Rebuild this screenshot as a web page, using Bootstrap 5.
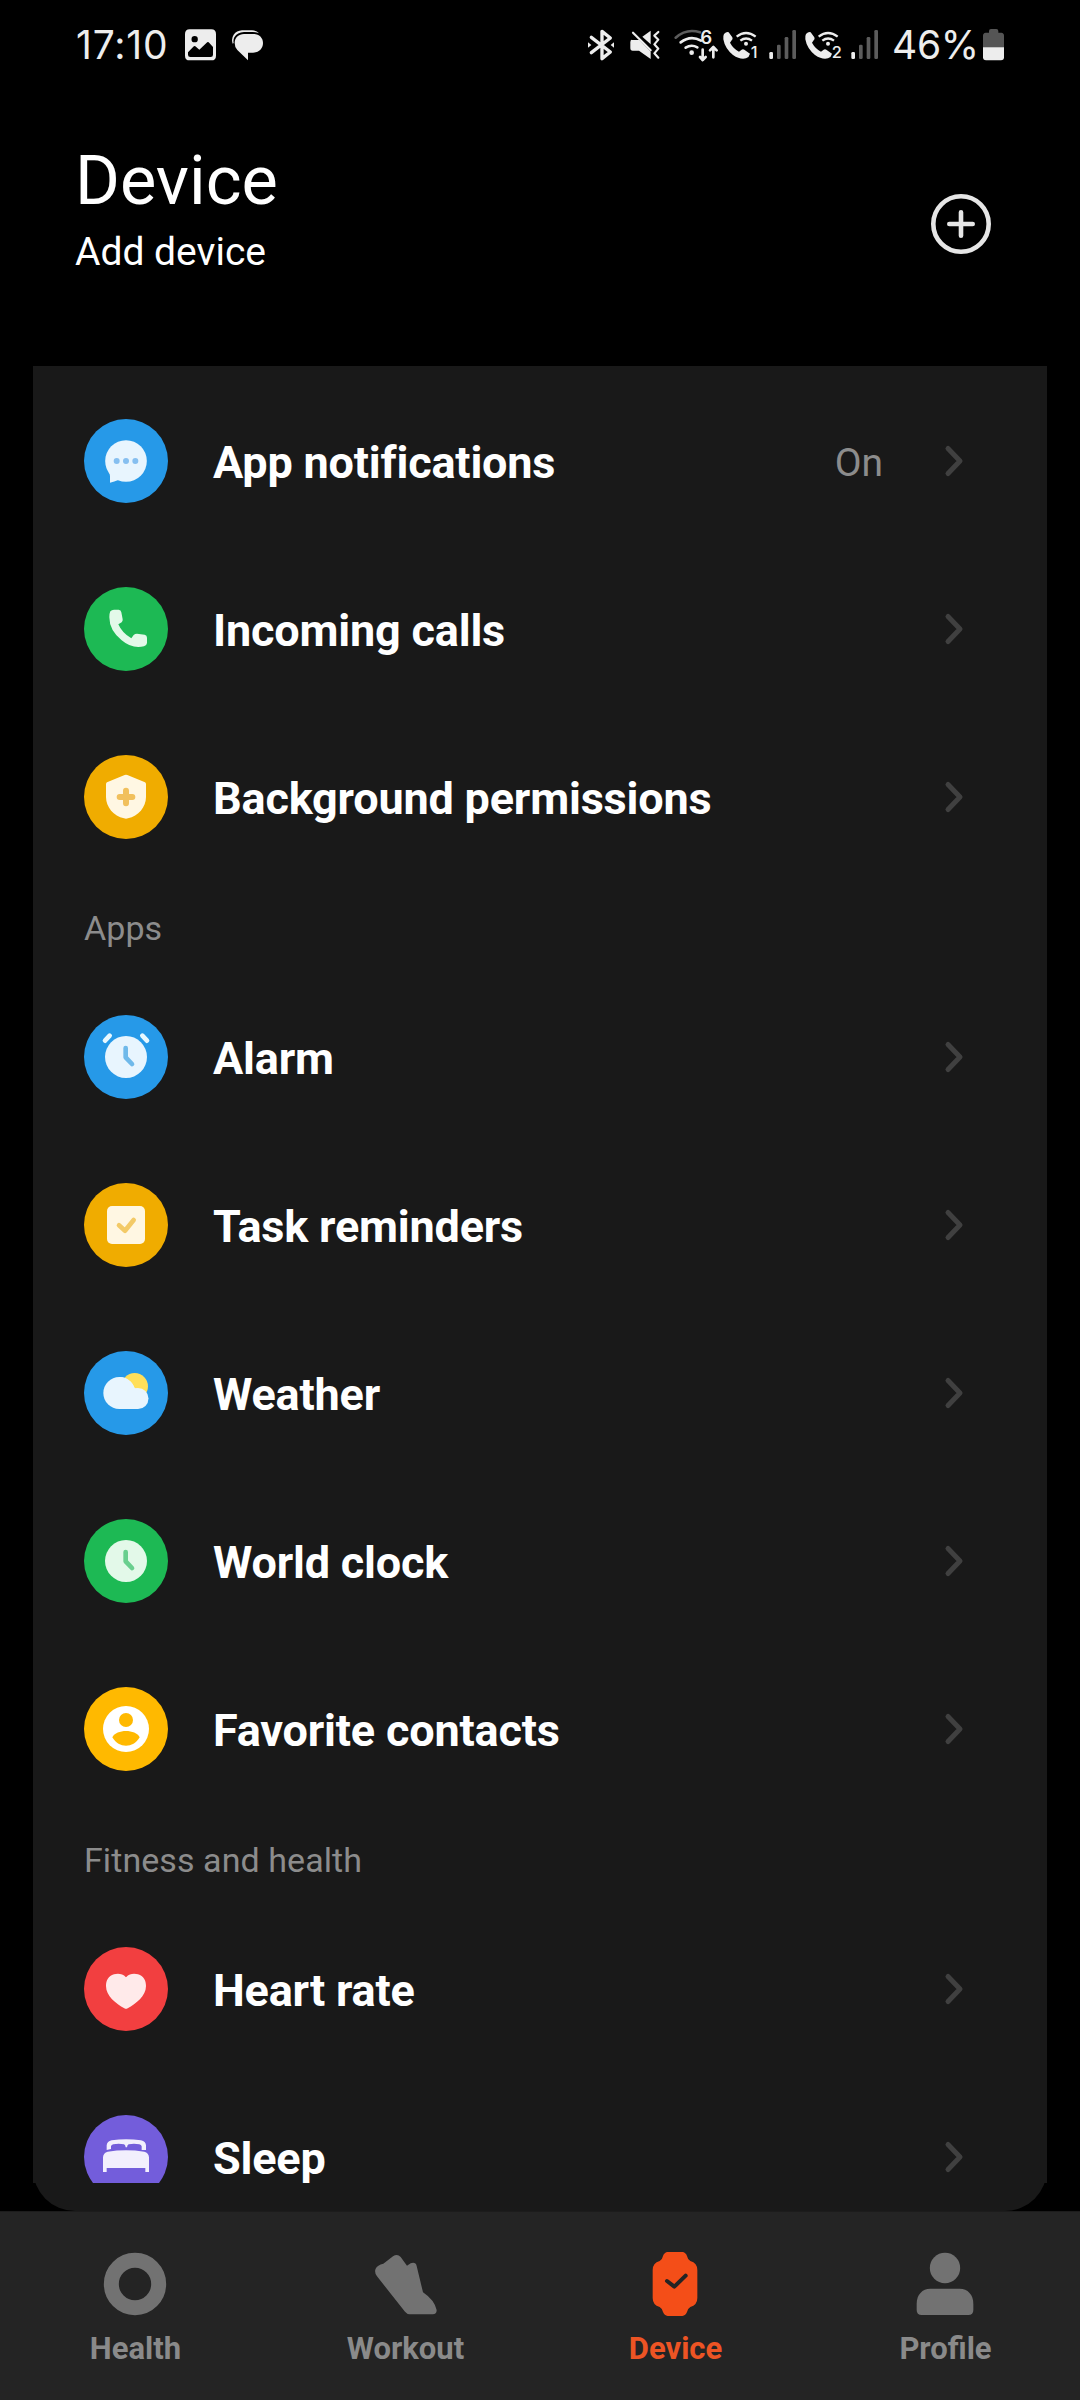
<!DOCTYPE html>
<html lang="en">
<head>
<meta charset="utf-8">
<meta name="viewport" content="width=device-width, initial-scale=1">
<title>Device</title>
<link href="https://cdn.jsdelivr.net/npm/bootstrap@5.3.0/dist/css/bootstrap.min.css" rel="stylesheet">
<style>
  body { background: #000; color: #fff; font-family: Roboto, sans-serif; width: 1080px; height: 2400px; overflow: hidden; }
  svg { display: block; flex: none; overflow: visible; }
  .status-bar { height: 90px; padding: 0 76px; color: #ededed; font-family: Inter, sans-serif; font-size: 39px; }
  .status-bar .clock { width: 109px; letter-spacing: .8px; }
  .status-bar .battery-text { width: 91px; margin-left: 13px; letter-spacing: -.3px; }
  .status-bar svg { fill: #ededed; height: 32px; }
  .ln { fill: none; stroke: #ededed; stroke-linecap: round; stroke-linejoin: round; }
  .dim { fill: #5c5c5c; }
  .app-header { height: 276px; padding: 51px 89px 0 75px; }
  .app-header h1 { font-size: 68.500px; font-weight: 400; line-height: 80px; margin: 0 0 7px; }
  .app-header p { font-size: 39px; line-height: 48px; margin: 0; }
  .add-btn { margin-top: 53px; }
  .panel { margin: 0 33px; height: 1845px; background: #191919; border-radius: 0 0 42px 42px; }
  .scroller { height: 1817px; background: #191919; padding-top: 11px; overflow: hidden; }
  .setting { height: 168px; padding: 0 84px 0 51px; }
  .setting .label { font-size: 45px; font-weight: 700; line-height: 54px; padding-top: 3px; margin-left: 45px; letter-spacing: -.19px; }
  .setting .value { font-size: 39px; line-height: 54px; padding-top: 3px; margin-right: 62px; color: #8c8c8c; }
  .section-title { height: 92px; padding: 3px 51px 0; font-size: 34px; font-weight: 400; color: #8c8c8c; margin: 0; letter-spacing: .07px; }
  .tabs { height: 189px; border-top: 1px solid #1c1c1c; background: #242424; padding-top: 40px; }
  .tab-item { color: #8a8a8a; font-size: 31px; font-weight: 700; line-height: 40px; }
  .tab-item span { padding-left: 1px; }
  .tab-item svg { fill: #727272; margin-bottom: 13px; }
  .tab-item.current { color: #ed5424; }
  .tab-item.current svg { fill: #f44e18; }
</style>
</head>
<body>
<svg width="0" height="0" class="position-absolute">
  <symbol id="chev" viewBox="0 0 18 32" overflow="visible"><path d="M3 3.5 15 16 3 28.5" fill="none" stroke="#404040" stroke-width="5" stroke-linecap="round" stroke-linejoin="round"/></symbol>
  <symbol id="call" viewBox="459 57 108 96" overflow="visible">
    <path d="M462 72Q470 64 476 67L487 82Q490 88 484 92L480 98Q490 116 507 125L515 119Q519 117 523 119L540 131Q538 141 528 145Q511 150 489 135Q465 116 460 88Q459 77 462 72Z"/>
    <path class="ln" style="stroke-linecap:butt" stroke-width="7" d="M500 80Q528 58 557 80M511 92Q528 79 546 92"/>
    <circle cx="528" cy="101" r="6"/>
  </symbol>
  <symbol id="signal" viewBox="594 57 87 96"><rect x="598" y="126" width="11" height="21" rx="4"/><g class="dim"><rect x="621" y="104" width="11" height="43" rx="4"/><rect x="644" y="81" width="11" height="66" rx="4"/><rect x="667" y="60" width="11" height="87" rx="4"/></g></symbol>
</svg>

<div class="status-bar d-flex align-items-center">
  <span class="clock">17:10</span>
  <svg width="31" viewBox="405 86 93 96"><path fill-rule="evenodd" d="M419 87H484Q498 87 498 101V166Q498 180 484 180H419Q405 180 405 166V101Q405 87 419 87ZM434 107A9.500 9.500 0 1 0 434 126A9.500 9.500 0 1 0 434 107ZM414 156V163Q414 170 421 170H482Q489 170 489 163V140L476 126Q473 124 470 127L448 148L436 138Q433 136 430 139Z"/></svg>
  <svg width="31" viewBox="546 89 93 96" style="margin-left:16px"><path d="M594 183V160H609C626 160 639 148 639 131S626 104 609 104H582C566 104 554 115 554 131Q554 144 562 152Z"/><path d="M548 133Q543 118 551 106Q560 94 576 93H606Q620 94 627 102Q619 98 608 98H582Q562 99 553 114Q549 122 551 131Z"/></svg>
  <svg class="ms-auto" width="28" viewBox="51 57 84 96"><path class="ln" stroke-width="10" d="M64 82 121 126 96 146V64L121 84 64 128"/><path d="M54 97 64 105 54 113ZM132 97 122 105 132 113Z"/></svg>
  <svg width="30" viewBox="180 57 90 96" style="margin-left:15px"><path d="M183 90H208L242 125V147L207 122H188Q181 122 181 114V96Q181 90 187 88ZM217 80 242 62V103Z"/><path class="ln" stroke-width="6.500" d="M189 68 242 121M265 66 253 77 265 89 253 103 265 116 253 130 265 143"/></svg>
  <svg width="45" viewBox="312 57 135 96" style="margin-left:14px"><path class="ln" style="stroke:#5c5c5c" stroke-width="8" stroke-linecap="butt" d="M317 83Q350 54 390 67"/><path class="ln" stroke-width="8" d="M332 97Q362 74 393 92M347 113Q364 102 382 112M398 119V149M390 141 398 150 407 141M430 142V112M420 121 430 111 440 121"/><circle cx="365" cy="128" r="7"/><text x="391" y="101" font-family="Inter" font-weight="600" font-size="56">6</text></svg>
  <svg width="36" viewBox="0 0 108 96" style="margin-left:4px"><use href="#call" width="108" height="96"/><text x="83" y="87" font-family="Inter" font-weight="500" font-size="49">1</text></svg>
  <svg width="29" viewBox="0 0 87 96" style="margin-left:9px"><use href="#signal" width="87" height="96"/></svg>
  <svg width="36" viewBox="0 0 108 96" style="margin-left:8px"><use href="#call" width="108" height="96"/><text x="80" y="87" font-family="Inter" font-weight="500" font-size="49">2</text></svg>
  <svg width="29" viewBox="0 0 87 96" style="margin-left:9px"><use href="#signal" width="87" height="96"/></svg>
  <span class="battery-text">46%</span>
  <svg width="21" viewBox="579 56 63 96"><path fill="#555" d="M597 67V62Q597 56 603 56H619Q625 56 625 62V67H634Q642 68 642 76V112H579V76Q579 68 587 67Z"/><path d="M579 111H642V141Q642 150 633 150H588Q579 150 579 141Z"/></svg>
</div>

<header class="app-header d-flex justify-content-between align-items-start">
  <div><h1>Device</h1><p>Add device</p></div>
  <svg class="add-btn" width="60" height="60" viewBox="0 0 60 60" fill="none" stroke="#e6e6e6" stroke-width="4.600" stroke-linecap="round"><circle cx="30" cy="30" r="27.700"/><path d="M30 18.300V41.700M18.300 30H41.700"/></svg>
</header>

<main class="panel">
  <div class="scroller">
    <div class="setting d-flex align-items-center">
      <svg width="84" height="84" viewBox="0 0 252 252"><circle cx="126" cy="126" r="126" fill="#2699e8"/><circle cx="126" cy="126" r="62.500" fill="#e8f5fe"/><path fill="#e8f5fe" d="M68 145Q78 158 78 172V191Q91 188 103 183L126 150Z"/><g fill="#86bff0"><circle cx="98" cy="126" r="9"/><circle cx="126" cy="126" r="9"/><circle cx="154" cy="126" r="9"/></g></svg>
      <span class="label flex-grow-1">App notifications</span><span class="value">On</span>
      <svg width="18" height="32"><use href="#chev"/></svg>
    </div>
    <div class="setting d-flex align-items-center">
      <svg width="84" height="84" viewBox="0 0 252 252"><circle cx="126" cy="126" r="126" fill="#1db954"/><path fill="#e3f9e9" d="M79 73Q83 68 90 68H104Q111 69 112 76L116 97Q117 102 113 106L103 112Q114 138 142 154L149 144Q153 140 159 140L182 143Q189 145 189 152V168Q188 176 180 178Q145 187 113 160Q76 130 76 91Q76 79 79 73Z"/></svg>
      <span class="label flex-grow-1">Incoming calls</span>
      <svg width="18" height="32"><use href="#chev"/></svg>
    </div>
    <div class="setting d-flex align-items-center">
      <svg width="84" height="84" viewBox="0 0 252 252"><circle cx="126" cy="126" r="126" fill="#f0ac00"/><path fill="#fff7e3" d="M122 60Q126 58 130 60L183 82Q186 84 186 88V126C186 156 163 184 132 190Q126 192 120 190C89 184 66 156 66 126V88Q66 84 69 82Z"/><path d="M126 107V145M107 126H145" stroke="#f1c05c" stroke-width="18" stroke-linecap="round"/></svg>
      <span class="label flex-grow-1">Background permissions</span>
      <svg width="18" height="32"><use href="#chev"/></svg>
    </div>
    <h2 class="section-title d-flex align-items-center">Apps</h2>
    <div class="setting d-flex align-items-center">
      <svg width="84" height="84" viewBox="0 0 252 252"><circle cx="126" cy="126" r="126" fill="#2699e8"/><circle cx="126" cy="126" r="63" fill="#e8f5fe"/><path d="M63 77 77 62M175 62 189 77" stroke="#e8f8ff" stroke-width="14" stroke-linecap="round"/><path d="M125 99V127L144 147" fill="none" stroke="#6fb9ea" stroke-width="14" stroke-linecap="round" stroke-linejoin="round"/></svg>
      <span class="label flex-grow-1">Alarm</span>
      <svg width="18" height="32"><use href="#chev"/></svg>
    </div>
    <div class="setting d-flex align-items-center">
      <svg width="84" height="84" viewBox="0 0 252 252"><circle cx="126" cy="126" r="126" fill="#f0ac00"/><rect x="69" y="69" width="114" height="114" rx="15" fill="#fff7e3"/><path d="M105 127 123 143 149 111" fill="none" stroke="#f3ca67" stroke-width="14" stroke-linecap="round" stroke-linejoin="round"/></svg>
      <span class="label flex-grow-1">Task reminders</span>
      <svg width="18" height="32"><use href="#chev"/></svg>
    </div>
    <div class="setting d-flex align-items-center">
      <svg width="84" height="84" viewBox="0 0 252 252"><circle cx="126" cy="126" r="126" fill="#2699e8"/><circle cx="152" cy="106" r="40" fill="#ffdf5a"/><g fill="#e8f5fe"><circle cx="106" cy="126" r="48"/><circle cx="162" cy="142.500" r="31.500"/><path d="M106 78C128 78 146 92 152 112H162V174H106Z"/></g></svg>
      <span class="label flex-grow-1">Weather</span>
      <svg width="18" height="32"><use href="#chev"/></svg>
    </div>
    <div class="setting d-flex align-items-center">
      <svg width="84" height="84" viewBox="0 0 252 252"><circle cx="126" cy="126" r="126" fill="#1db954"/><circle cx="126" cy="126" r="63" fill="#e3f9e9"/><path d="M125 99V127L144 147" fill="none" stroke="#69cf8e" stroke-width="14" stroke-linecap="round" stroke-linejoin="round"/></svg>
      <span class="label flex-grow-1">World clock</span>
      <svg width="18" height="32"><use href="#chev"/></svg>
    </div>
    <div class="setting d-flex align-items-center">
      <svg width="84" height="84" viewBox="0 0 252 252"><circle cx="126" cy="126" r="126" fill="#ffb900"/><circle cx="126" cy="126" r="69" fill="#fff"/><circle cx="126" cy="99" r="21" fill="#ffb900"/><path fill="#ffb900" d="M85 151C97 126 155 126 167 151C147 185 105 185 85 151Z"/></svg>
      <span class="label flex-grow-1">Favorite contacts</span>
      <svg width="18" height="32"><use href="#chev"/></svg>
    </div>
    <h2 class="section-title d-flex align-items-center">Fitness and health</h2>
    <div class="setting d-flex align-items-center">
      <svg width="84" height="84" viewBox="0 0 252 252"><circle cx="126" cy="126" r="126" fill="#f23f40"/><path fill="#ffeaea" d="M126 91C137 79 151 79 162 82C179 87 186 101 186 117C186 147 156 170 131 184Q126 187 121 184C96 170 66 147 66 117C66 101 73 87 90 82C101 79 115 79 126 91Z"/></svg>
      <span class="label flex-grow-1">Heart rate</span>
      <svg width="18" height="32"><use href="#chev"/></svg>
    </div>
    <div class="setting d-flex align-items-center">
      <svg width="84" height="84" viewBox="0 0 252 252"><circle cx="126" cy="126" r="126" fill="#735ddb"/><g fill="#f2effd"><path d="M68 105V91Q69 79 83 76Q126 70 171 76Q185 79 186 91V105H173V94Q172 89 166 88Q150 85 134 88Q130 89 129 97H125Q124 89 120 88Q104 85 88 88Q82 89 81 94V102Z"/><path d="M57 171V127Q58 113 71 110Q126 102 181 110Q194 113 195 127V171H184V159H68V171Z"/></g></svg>
      <span class="label flex-grow-1">Sleep</span>
      <svg width="18" height="32"><use href="#chev"/></svg>
    </div>
  </div>
</main>

<nav class="tabs row g-0 text-center">
  <div class="tab-item col d-flex flex-column align-items-center"><svg width="64" height="64" viewBox="0 0 192 192"><circle cx="96" cy="96" r="71" fill="none" stroke="#727272" stroke-width="45"/></svg><span>Health</span></div>
  <div class="tab-item col d-flex flex-column align-items-center"><svg width="64" height="64" viewBox="1059 186 192 192"><path d="M1090 221 1119 199Q1132 190 1142 201L1161 227 1172 220Q1187 215 1190 228L1209 307Q1243 330 1250 360Q1250 373 1238 373H1169Q1162 373 1155 365L1071 259Q1062 247 1067 236Q1072 225 1090 221Z"/></svg><span>Workout</span></div>
  <div class="tab-item current col d-flex flex-column align-items-center"><svg width="64" height="64" viewBox="0 0 192 192"><path d="M74 0H118Q128 1 132 12Q134 23 142 27Q163 33 163 54V138Q163 159 142 165Q134 169 132 180Q128 191 118 192H74Q64 191 60 180Q58 169 50 165Q29 159 29 138V54Q29 33 50 27Q58 23 60 12Q64 1 74 0Z"/><path d="M72 87 94 104 128 71" fill="none" stroke="#242424" stroke-width="12" stroke-linecap="round" stroke-linejoin="round"/></svg><span>Device</span></div>
  <div class="tab-item col d-flex flex-column align-items-center"><svg width="64" height="64" viewBox="0 0 192 192"><circle cx="96" cy="48" r="45.500"/><path d="M11 155C11 128 28 110 52 110H140C164 110 181 128 181 155V174Q181 189 166 189H26Q11 189 11 174Z"/></svg><span>Profile</span></div>
</nav>
<script src="https://cdn.jsdelivr.net/npm/bootstrap@5.3.0/dist/js/bootstrap.bundle.min.js"></script>
</body>
</html>
